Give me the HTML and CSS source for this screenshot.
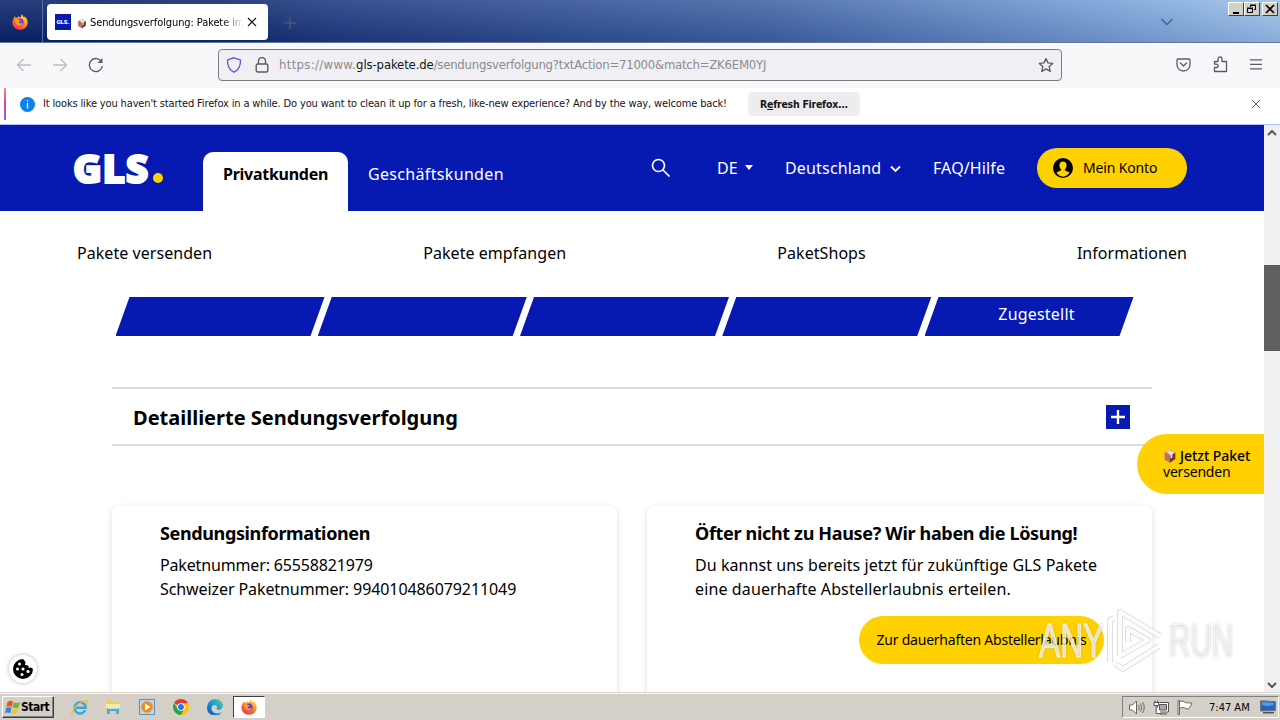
FILE: index.html
```html
<!DOCTYPE html>
<html lang="de">
<head>
<meta charset="utf-8">
<title>Sendungsverfolgung</title>
<link rel="stylesheet" href="styles.css">
</head>
<body>
<svg width="0" height="0" class="defs">
  <defs>
    <linearGradient id="flame" x1="0.8" y1="0" x2="0.2" y2="1"><stop offset="0" stop-color="#ffe13a"/><stop offset=".45" stop-color="#ff9020"/><stop offset="1" stop-color="#f0255c"/></linearGradient>
    <linearGradient id="edgeg" x1="0" y1="1" x2="1" y2="0"><stop offset="0" stop-color="#0b4fa8"/><stop offset=".55" stop-color="#1c9be0"/><stop offset="1" stop-color="#5fdc6a"/></linearGradient>
    <symbol id="firefox" viewBox="0 0 16 16">
      <path fill="url(#flame)" d="M1.7 4.2 2.8 2l1 1.7L5.6 3.4 7 1.8l.3 1.8L9 2.8 9.5.3c1 .6 1.7 1.700 2.100 2.900l1-.6c1.900 1.400 3.200 3.400 3.100 6.100-.1 4.100-3.500 7.100-7.600 7.100C3.800 15.800.4 12.700.4 8.600c0-1.600.5-3.100 1.300-4.400z"/>
      <circle cx="8" cy="8.300" r="3.700" fill="#6a3fe0"/>
      <path fill="#ff9a1c" d="M3.800 5.300c1.400-.5 2.500-.1 3.300.7l1.600.3c-.2.900-1 1.200-1.800 1.600-.5.700.6 1.800 2 1.400 1.300-.4 2 0 2 .5-1 1.900-3.400 2.500-5.200 1.500C3.800 10.200 3.200 7.400 3.800 5.300z"/>
    </symbol>
    <symbol id="box" viewBox="0 0 12 12">
      <path fill="#c98a78" d="M1.500 3 6 .5l4.500 2.500v5.500L6 11.800 1.500 9z"/><path fill="#b9705c" d="M1.500 3 6 5.700v6.100L1.500 9z"/><path fill="#7a3328" d="M6 5.700 10.500 3v5.500L6 11.800z"/><path fill="#f3e2dd" d="M3 2.200 5.500 1l4.500 2.300-2 1.200v3L6.500 8.200V5.300z"/>
    </symbol>
  </defs>
</svg>

<div class="screen">
  <header class="titlebar">
    <div class="pinned"><svg width="16" height="16"><use href="#firefox"/></svg></div>
    <div class="tab">
      <span class="favicon">GLS.</span>
      <svg class="tab-box" width="10" height="11"><use href="#box"/></svg>
      <span class="tab-title">Sendungsverfolgung: Pakete im</span>
      <svg width="10" height="10" viewBox="0 0 10 10"><path d="M1 1l8 8M9 1L1 9" stroke="#15141a" stroke-width="1.2"/></svg>
    </div>
    <svg class="newtab" width="12" height="12" viewBox="0 0 12 12"><path d="M6 0v12M0 6h12" stroke="#4f6475" stroke-width="1.200"/></svg>
    <svg class="tablist" width="14" height="8" viewBox="0 0 14 8"><path d="M1.500 1L7 6.500 12.500 1" fill="none" stroke="#42608c" stroke-width="1.500"/></svg>
    <div class="winbtns">
      <span class="wb"><svg width="12" height="10"><path d="M3 8h6v2H3z"/></svg></span>
      <span class="wb"><svg width="12" height="10" fill="none" stroke="#000"><path d="M4.500 3V1.500h5v4H8M4 1h6M1.500 4.500h5v4h-5zM1 4h6"/></svg></span>
      <span class="wb last"><svg width="12" height="10"><path d="M2 1l8 8M10 1L2 9" stroke="#000" stroke-width="1.700"/></svg></span>
    </div>
  </header>

  <div class="toolbar">
    <svg class="back" width="16" height="14" viewBox="0 0 16 14" fill="none" stroke="#bdbdc2" stroke-width="1.300"><path d="M15 7H1.500M7.500 1l-6 6 6 6"/></svg>
    <svg class="fwd" width="16" height="14" viewBox="0 0 16 14" fill="none" stroke="#bdbdc2" stroke-width="1.300"><path d="M1 7h13.500M8.500 1l6 6-6 6"/></svg>
    <svg class="reload" width="16" height="16" viewBox="0 0 16 16" fill="none" stroke="#5b5b66" stroke-width="1.400"><path d="M13.600 5A6.500 6.500 0 1 0 14.300 9"/><path d="M14.500 1v5h-5z" fill="#5b5b66" stroke="none"/></svg>
    <div class="urlbar">
      <svg width="16" height="16" viewBox="0 0 16 16" fill="none" stroke="#6158d0" stroke-width="1.300"><path d="M8 .8 14.500 3c.2 5.800-1.700 10-6.500 12.200C3.200 13 1.300 8.800 1.500 3z"/></svg>
      <svg class="lock" width="14" height="16" viewBox="0 0 14 16" fill="none" stroke="#5b5b66" stroke-width="1.400"><rect x="1.200" y="7" width="11.600" height="8" rx="1.500"/><path d="M3.500 7V4a3.500 3.500 0 0 1 7 0v3"/></svg>
      <div class="url"><span class="u1">https://www.</span><span class="u2">gls-pakete.de</span><span class="u3">/sendungsverfolgung?txtAction=71000&amp;match=ZK6EM0YJ</span></div>
      <svg class="star" width="16" height="16" viewBox="0 0 18 17" fill="none" stroke="#5b5b66" stroke-width="1.500" stroke-linejoin="round"><path d="M9 1.200l2.200 4.900 5.400.6-4 3.600 1.200 5.300L9 12.900l-4.800 2.700 1.200-5.300-4-3.600 5.400-.6z"/></svg>
    </div>
    <svg class="pocket" width="15" height="14" viewBox="0 0 15 14" fill="none" stroke="#5b5b66" stroke-width="1.300" stroke-linecap="round"><path d="M2 1h11q1 0 1 1v4.500a6.500 6.500 0 0 1-13 0V2q0-1 1-1zM4.500 5l3 3 3-3"/></svg>
    <svg class="ext" width="16" height="17" viewBox="0 0 16 17" fill="none" stroke="#5b5b66" stroke-width="1.300" stroke-linejoin="round"><path d="M1.500 5.500H5V3a2 2 0 0 1 4 0v2.500h4.500v10h-12v-4h2a1.700 1.700 0 0 0 0-3.400h-2z"/></svg>
    <svg class="menu" width="12" height="11" viewBox="0 0 12 11"><path d="M0 .8h12M0 5.300h12M0 9.800h12" stroke="#5b5b66" stroke-width="1.200"/></svg>
  </div>

  <div class="notice">
    <svg width="15" height="15" viewBox="0 0 15 15"><circle cx="7.500" cy="7.500" r="7.500" fill="#0a84e6"/><path d="M7.500 3v1.600M7.500 6v5.500" stroke="#d5efff" stroke-width="1.300"/></svg>
    <span class="notice-text">It looks like you haven't started Firefox in a while. Do you want to clean it up for a fresh, like-new experience? And by the way, welcome back!</span>
    <span class="refresh"><span class="refresh-label">R<u>e</u>fresh Firefox...</span></span>
    <svg class="notice-x" width="10" height="10" viewBox="0 0 10 10"><path d="M1 1l8 8M9 1L1 9" stroke="#6b6b72"/></svg>
  </div>

  <div class="viewport">
    <main class="page">
      <div class="gls-head">
        <div class="logo"><span class="logo-text">GLS</span><i></i></div>
        <div class="maintab"><span class="t-priv">Privatkunden</span></div>
        <span class="t-gesch">Geschäftskunden</span>
        <svg class="search" width="20" height="20" viewBox="0 0 20 20" fill="none" stroke="#fff" stroke-width="1.700"><circle cx="7.500" cy="7.500" r="6"/><path d="M12 12l6.500 6.500"/></svg>
        <span class="t-de">DE</span>
        <i class="caret"></i>
        <span class="t-land">Deutschland</span>
        <svg class="chev" width="11" height="8" viewBox="0 0 11 8"><path d="M1 1.500l4.500 4.500L10 1.500" fill="none" stroke="#fff" stroke-width="1.800"/></svg>
        <span class="t-faq">FAQ/Hilfe</span>
        <div class="account">
          <svg width="20" height="20" viewBox="0 0 20 20"><circle cx="10" cy="10" r="10"/><path fill="#ffd100" d="M10 3.500c-2.300 0-3.600 1.700-3.600 3.800 0 1.600.6 3 1.600 3.900v1.200c-1.500.7-3.600 1.200-4.500 2.200C5 17.400 7.300 18.700 10 18.700s5-1.300 6.500-4.100c-.9-1-3-1.500-4.500-2.200v-1.200c1-.9 1.600-2.300 1.600-3.900 0-2.100-1.300-3.800-3.600-3.800z"/></svg>
          <span class="t-konto">Mein Konto</span>
        </div>
      </div>
      <nav class="subnav">
        <span class="s1">Pakete versenden</span><span class="s2">Pakete empfangen</span><span class="s3">PaketShops</span><span class="s4">Informationen</span>
      </nav>
      <div class="steps"><div></div><div></div><div></div><div></div><div><span class="t-zu">Zugestellt</span></div></div>
      <section class="detail">
        <h2>Detaillierte Sendungsverfolgung</h2>
        <svg width="24" height="24" viewBox="0 0 24 24"><path fill="#061ab1" d="M0 0h24v24H0z"/><path d="M12 5v14M5 12h14" stroke="#fff" stroke-width="2.400"/></svg>
      </section>
      <div class="cards">
        <section class="card">
          <h3 class="h-info">Sendungsinformationen</h3>
          <p><span class="p1">Paketnummer: 65558821979</span></p>
          <p><span class="p2">Schweizer Paketnummer: 994010486079211049</span></p>
        </section>
        <section class="card">
          <h3 class="h-out">Öfter nicht zu Hause? Wir haben die Lösung!</h3>
          <p><span class="p3">Du kannst uns bereits jetzt für zukünftige GLS Pakete</span></p>
          <p><span class="p4">eine dauerhafte Abstellerlaubnis erteilen.</span></p>
          <div class="cta"><span class="t-cta">Zur dauerhaften Abstellerlaubnis</span></div>
        </section>
      </div>
    </main>
    <div class="scrollbar">
      <svg class="up" width="10" height="6" viewBox="0 0 10 6"><path d="M1 5l4-4 4 4" fill="none" stroke="#555" stroke-width="2"/></svg>
      <div class="thumb"></div>
      <svg class="down" width="10" height="6" viewBox="0 0 10 6"><path d="M1 1l4 4 4-4" fill="none" stroke="#555" stroke-width="2"/></svg>
    </div>
  </div>

  <footer class="taskbar">
    <div class="start">
      <svg width="16" height="15" viewBox="0 0 16 15"><path fill="#e2572b" d="M2.500 2C4.500.5 6.300.6 8 1.700L6.800 7C5 6 3.300 6 1.300 7z"/><path fill="#71b536" d="M8.800 2.200c2 1 4 1 6.200-.2l-1.300 5.200c-2 1.100-4 1.100-6 .2z"/><path fill="#3287d4" d="M1.100 8c2-1 3.700-1 5.400 0l-1.300 5.200C3.600 12.200 2 12.200 0 13z"/><path fill="#f8c42e" d="M7.400 8.400c2 .9 4 .9 6-.2L12.200 13c-2 1.200-4 1.200-6 .4z"/></svg>
      <span class="t-start">Start</span>
    </div>
    <svg class="ie" width="18" height="17" viewBox="0 0 18 17" fill="none"><path d="M14.200 11.200A5.600 5.600 0 1 1 14.700 8.800H5" stroke="#3aa6dc" stroke-width="2.500"/><path d="M2 15.500C-1 15.500 2 9 8 4.800 12 2 16.500.5 16.500 2.500q0 1.500-1.500 3.300" stroke="#e8bd3d" stroke-width="1.300"/></svg>
    <svg class="exp" width="16" height="16" viewBox="0 0 16 16"><path fill="#eacb68" d="M1 2l5-1 1 2h7v10H1z"/><path fill="#f9e9a8" d="M1 5h14v5H1z"/><path fill="#54a9cf" d="M2 9h12v6h-3v-3H5v3H2z"/><path fill="#b8e4f3" d="M3 9h10v1H3z"/></svg>
    <svg class="wmp" width="16" height="16" viewBox="0 0 16 16"><path fill="#b6d7ed" stroke="#5991c1" d="M.5.5h15v15H.5z"/><circle cx="8" cy="8" r="5.800" fill="#f28a17"/><path fill="#fff" d="M6 4.500l5.500 3.500L6 11.500z"/></svg>
    <svg class="chrome" width="16" height="16" viewBox="0 0 16 16"><path fill="#e33b2e" d="M8 8L1.070 4A8 8 0 0 1 14.930 4z"/><path fill="#fbc116" d="M8 8l6.930-4A8 8 0 0 1 8 16z"/><path fill="#fbc116" d="M8 4.300h7.100A8 8 0 0 1 8 16l3-6z"/><path fill="#2da14c" d="M8 16A8 8 0 0 1 1.070 4L5 10l5.500 1z"/><circle cx="8" cy="8" r="3.800" fill="#fff"/><circle cx="8" cy="8" r="2.900" fill="#2c73e6"/></svg>
    <svg class="edge" width="16" height="16" viewBox="0 0 16 16"><path fill="url(#edgeg)" d="M.2 7.500C.8 3 4 0 8.200 0 12.800 0 16 3.200 16 6.600c0 2.700-2 4.200-4.200 4.200-1.600 0-2.300-.5-2.300-1 0-.4.600-.7.600-1.600C10.100 6.600 8.700 6 7.500 6c-2 0-3.300 2-3 4.300.4 2.500 3 4.300 5.700 4.200 1.300 0 2.500-.5 3.700-1.100.5-.2.600.1.400.4A8 8 0 0 1 .2 7.500z"/></svg>
    <div class="active-task"><svg width="16" height="16"><use href="#firefox"/></svg></div>
    <div class="tray">
      <svg width="16" height="15" viewBox="0 0 16 15" fill="none" stroke="#666"><path fill="#fff" d="M.5 5h3l4-4v13l-4-4h-3z"/><path d="M9.500 5q1.500 2.500 0 5M11.500 3.500q2.500 4 0 8M13.500 2q3.500 5.500 0 11"/></svg>
      <svg class="net" width="16" height="15" viewBox="0 0 16 15" fill="none" stroke="#555"><path fill="#fff" d="M5 2.500h10.500v9.500H4.500V6"/><path fill="#aaa" d="M6.500 4.500h7v5.500h-7z"/><path fill="#fff" d="M1 2.500h4.500v3H1zM2 .5v2M4.500.5v2M3.200 5.500v8H8M7 14h7"/></svg>
      <svg class="flag" width="16" height="15" viewBox="0 0 16 15" fill="#fff" stroke="#666"><path d="M1 .5h1.500V14.500H1zM2.500 1.500c4-1.500 5 1 7 1.300L15 3q-1.200 3-3.500 6-3 0-4-1.200-2-.8-5 .5z"/></svg>
      <span class="clock">7:47 AM</span>
      <svg class="desk" width="16" height="14" viewBox="0 0 16 14"><path fill="#2564bd" stroke="#777" d="M.5.8l15 .7v9.200L.5 11z"/><path fill="#559be2" d="M2 2l12 .6v2Q8 7 2 5z"/><path fill="#555" d="M3 12h11v1.500H3z"/></svg>
    </div>
  </footer>

  <div class="side-cta">
    <div><svg width="14" height="14"><use href="#box"/></svg><span class="t-jetzt">Jetzt Paket</span></div>
    <span class="t-vers">versenden</span>
  </div>
  <div class="cookie">
    <svg width="20" height="20" viewBox="0 0 20 20"><path d="M10 0a10 10 0 1 0 10 10l-2-1.500-2.200.5-.6-2.500-3.200-.6.500-3z"/><g fill="#fff"><circle cx="6.500" cy="5" r="1.500"/><circle cx="10" cy="10" r="1.600"/><circle cx="4.500" cy="10" r="1.500"/><circle cx="9" cy="15.500" r="1.500"/><circle cx="15" cy="12.500" r="1.600"/></g></svg>
  </div>
  <div class="watermark">
    <span class="w1">ANY</span>
    <svg width="62" height="66" viewBox="0 0 62 66" fill="none" stroke-linejoin="round"><g stroke="#bdbdbd" stroke-opacity=".5" stroke-width="6"><path d="M5 54V12l4-2M15 48V4l40 24M23 34V21l20 11-28 16M10 56l8 5 36-23"/></g><g stroke="#fff" stroke-opacity=".9" stroke-width="4"><path d="M5 54V12l4-2M15 48V4l40 24M23 34V21l20 11-28 16M10 56l8 5 36-23"/></g></svg>
    <span class="w2">RUN</span>
  </div>
</div>
</body>
</html>
```
FILE: styles.css
```css
* { box-sizing: border-box; }
body { margin: 0; overflow: hidden; font-family: "Noto Sans", sans-serif; color: #000; }
svg { display: block; flex: none; }
span { white-space: nowrap; }
.defs { position: absolute; }
.screen { position: relative; width: 1280px; height: 720px; display: flex; flex-direction: column; overflow: hidden; background: #fff; }

.titlebar { height: 43px; flex: none; display: flex; align-items: flex-start; background: linear-gradient(180deg, rgba(255,255,255,.12), rgba(0,0,60,.12)), linear-gradient(97deg, #0a246a 0%, #0d2769 16%, #1e3a80 26%, #3f64a5 60%, #7ba5da 88%, #9dc4ee 100%); border-bottom: 1px solid #61779f; }
.pinned { width: 43px; height: 43px; padding: 14px 0 0 12px; border-right: 1px solid #5b6e9c; }
.tab { width: 221px; height: 36px; margin: 4px 0 0 4px; padding: 0 11px 0 8px; background: #fff; border-radius: 4px; display: flex; align-items: center; font: 11px "DejaVu Sans Condensed", "DejaVu Sans", sans-serif; }
.favicon { width: 16px; height: 16px; background: #0619b0; color: #fff; font: 900 6px/16px Roboto, sans-serif; text-align: center; }
.tab-box { margin: 2px 3px 0 6px; }
.tab-title { width: 154px; margin-right: 3px; overflow: hidden; letter-spacing: -.1px; -webkit-mask-image: linear-gradient(90deg, #000 86%, transparent 100%); mask-image: linear-gradient(90deg, #000 86%, transparent 100%); }
.newtab { margin: 17px 0 0 16px; }
.tablist { margin: 18px 0 0 auto; }
.winbtns { display: flex; margin: 2px 2px 0 54px; }
.wb { width: 16px; height: 14px; background: #d4d0c8; border: 1px solid; border-color: #fff #404040 #404040 #fff; padding: 1px; }
.wb.last { margin-left: 2px; }

.toolbar { height: 45px; flex: none; display: flex; align-items: center; background: #f8f8fa; padding-bottom: 2px; }
.back { margin-left: 16px; }
.fwd { margin-left: 20px; }
.reload { margin-left: 20px; }
.urlbar { width: 844px; height: 32px; margin-left: 114px; padding: 0 7px; display: flex; align-items: center; background: #f0f0f4; border: 1px solid #7b7b82; border-radius: 4px; }
.lock { margin-left: 13px; }
.url { margin-left: 10px; color: #8a8a90; font: 13px "DejaVu Sans Condensed", "DejaVu Sans", sans-serif; display: flex; }
.u1 { letter-spacing: .33px; }
.u2 { color: #15141a; letter-spacing: -.13px; }
.u3 { letter-spacing: -.23px; }
.star { margin-left: auto; }
.pocket { margin-left: 114px; }
.ext { margin-left: 22px; }
.menu { margin-left: 21px; }

.notice { height: 32px; margin: 0 4px 0 4px; flex: none; display: flex; align-items: center; padding-left: 14px; background: #fff; border-left: 2px solid; border-image: linear-gradient(#ff9060, #e6409e 45%, #9059ff) 1; font: 11px "DejaVu Sans Condensed", "DejaVu Sans", sans-serif; color: #15141a; }
.notice-text { margin: -2px 0 0 8px; letter-spacing: -.146px; }
.refresh { width: 112px; height: 24px; margin-left: auto; background: #ededf0; border-radius: 4px; font-weight: bold; font-size: 10.500px; display: flex; align-items: center; justify-content: center; }
.refresh-label { letter-spacing: -.27px; }
.notice-x { margin: 0 15px 0 391px; }

.viewport { flex: 1; min-height: 0; margin-top: 4px; border-top: 1px solid #b5bdf5; display: flex; }
.page { width: 1264px; overflow: hidden; display: flex; flex-direction: column; }
.gls-head { height: 86px; flex: none; background: #061ab1; color: #fff; display: flex; font-size: 16px; line-height: 24px; }
.logo { width: 91px; margin: 23px 0 0 72px; display: flex; align-items: flex-start; }
.logo-text { width: 79px; font: 900 39px/40px "Noto Sans", sans-serif; -webkit-text-stroke: 2px #fff; letter-spacing: .6px; padding-left: 1px; }
.logo i { width: 10px; height: 10px; border-radius: 50%; background: #ffd100; margin: 25px 0 0 2px; }
.maintab { width: 145px; height: 59px; margin: 27px 0 0 40px; padding: 10px 20px; background: #fff; border-radius: 10px 10px 0 0; color: #000; font-weight: 700; }
.t-priv { letter-spacing: -.27px; }
.t-gesch { width: 135px; margin: 37px 0 0 20px; letter-spacing: .33px; }
.search { margin: 33px 0 0 148px; }
.t-de { width: 20px; margin: 31px 0 0 46px; }
.caret { border: 4px solid transparent; border-top: 5px solid #fff; margin: 40px 0 0 8px; height: 0; }
.t-land { width: 96px; margin: 31px 0 0 32px; letter-spacing: .17px; }
.chev { margin: 40px 0 0 9px; }
.t-faq { width: 72px; margin: 31px 0 0 32px; letter-spacing: .12px; }
.account { width: 150px; height: 40px; margin: 23px 0 0 32px; padding-left: 16px; border-radius: 20px; background: #ffd100; color: #000; display: flex; align-items: center; gap: 10px; font-size: 14px; }
.t-konto { letter-spacing: -.15px; }

.subnav { height: 86px; flex: none; padding: 30px 77px 0; display: flex; justify-content: space-between; font-size: 16px; line-height: 24px; letter-spacing: .05px; }
.steps { height: 39px; flex: none; margin-left: 115.500px; display: flex; }
.steps div { width: 209px; margin-right: -6.750px; flex: none; background: #061ab1; clip-path: polygon(14px 0, 100% 0, 195px 100%, 0 100%); color: #fff; text-align: center; font-size: 16px; line-height: 35px; padding-left: 15px; letter-spacing: .2px; }
.detail { height: 59px; flex: none; margin: 51px 112px 0; padding: 0 22px 0 21px; display: flex; align-items: center; justify-content: space-between; border: solid #dbdbdb; border-width: 2px 0; }
h2 { margin: 2px 0 0; font-size: 20px; line-height: 26px; white-space: nowrap; }
.cards { flex: 1; margin: 60px 112px 0; display: flex; gap: 30px; }
.card { width: 505px; height: 240px; padding: 14px 48px; border-radius: 8px; box-shadow: 0 2px 7px rgba(0,0,0,.13); }
h3 { margin: 0 0 7px; font-size: 18px; line-height: 26px; white-space: nowrap; }
.h-info { letter-spacing: -.37px; }
.h-out { letter-spacing: -.33px; }
.card p { margin: 0; font-size: 16px; line-height: 24px; }
.p1 { letter-spacing: -.15px; }
.p2 { letter-spacing: -.09px; }
.p3 { letter-spacing: .06px; }
.p4 { letter-spacing: .12px; }
.cta { width: 245px; height: 48px; margin: 15px 0 0 164px; padding-bottom: 1px; border-radius: 24px; background: #ffd100; font-size: 14px; display: flex; align-items: center; justify-content: center; }
.t-cta { letter-spacing: -.23px; }

.scrollbar { width: 16px; background: #f0f0f0; display: flex; flex-direction: column; align-items: center; }
.up { margin-top: 5px; }
.thumb { width: 16px; height: 86px; margin-top: 129px; background: #606060; }
.down { margin: auto 0 4px; }

.taskbar { height: 28px; flex: none; background: #d4d0c8; border-top: 1px solid #d4d0c8; box-shadow: inset 0 1px #fff; display: flex; align-items: center; padding: 1px 0 0; }
.start { width: 52px; height: 22px; margin-left: 2px; padding-left: 2px; display: flex; align-items: center; border: 1px solid; border-color: #fff #404040 #404040 #fff; box-shadow: inset -1px -1px #808080; font: bold 12px "DejaVu Sans Condensed", "DejaVu Sans", sans-serif; }
.t-start { letter-spacing: -.5px; }
.ie { margin-left: 17px; }
.exp { margin-left: 16px; }
.wmp { margin-left: 18px; }
.chrome { margin-left: 18px; }
.edge { margin-left: 18px; }
.active-task { width: 32px; height: 22px; margin-left: 10px; display: grid; place-items: center; background: #fff; border: 1px solid; border-color: #404040 #fff #fff #404040; }
.tray { width: 157px; height: 22px; margin: 0 1px 0 auto; padding-left: 6px; display: flex; align-items: center; border: 1px solid; border-color: #808080 #fff #fff #808080; font: 11px "DejaVu Sans Condensed", "DejaVu Sans", sans-serif; }
.net, .flag { margin-left: 8px; }
.clock { width: 41px; margin-left: 16px; }
.desk { margin-left: 10px; }

.side-cta { position: absolute; left: 1137px; top: 434px; width: 127px; height: 60px; padding: 14px 0 0 26px; border-radius: 30px 0 0 30px; background: #ffd100; font-size: 14px; line-height: 16px; }
.side-cta div { display: flex; align-items: center; gap: 3px; }
.t-jetzt { font-weight: 500; letter-spacing: -.05px; }
.side-cta > span { display: block; letter-spacing: -.2px; }
.cookie { position: absolute; left: 9px; top: 655px; width: 28px; height: 28px; border-radius: 50%; background: #fff; box-shadow: 0 0 4px rgba(0,0,0,.3); display: grid; place-items: center; }
.watermark { position: absolute; left: 1039px; top: 608px; display: flex; align-items: center; color: rgba(255,255,255,.65); font: 48px/66px "Liberation Sans Narrow", "Liberation Sans", sans-serif; text-shadow: 0 0 3px rgba(120,120,120,.6); -webkit-text-stroke: 1.500px rgba(255,255,255,.6); }
.watermark span { width: 64px; transform-origin: 0 50%; transform: scaleX(.66); }
.watermark .w2 { transform: scaleX(.62); }
.watermark svg { margin: 0 2px 0 2px; }
```
